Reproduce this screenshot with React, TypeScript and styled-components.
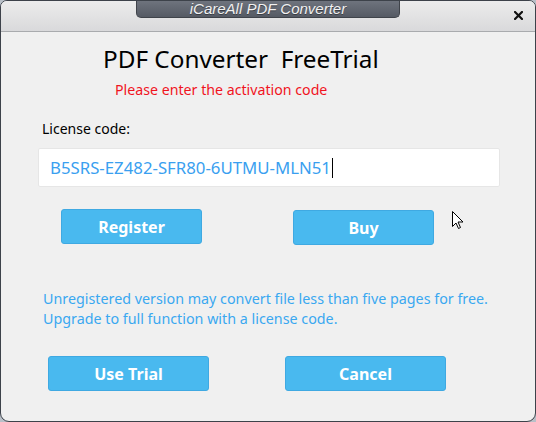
import React from "react";
import styled, { createGlobalStyle } from "styled-components";

const Global = createGlobalStyle`
  html, body { margin: 0; padding: 0; background: #b9c0c8; }
  body { width: 536px; height: 422px; overflow: hidden; }
`;

const Window = styled.div`
  position: relative;
  box-sizing: border-box;
  width: 536px;
  height: 422px;
  border: 1px solid #3d424a;
  border-radius: 7px 7px 9px 9px;
  background: #f0f0f0;
  overflow: hidden;
  display: flex;
  flex-direction: column;
  font-family: "Noto Sans", "Open Sans", sans-serif;
`;

const TitleBar = styled.div`
  height: 30px;
  flex: none;
  border-bottom: 1px solid #a9abae;
  background: linear-gradient(#ececec, #d9d9db);
  display: grid;
  grid-template-columns: 1fr 264px 1fr;
  align-items: start;
`;

const TitleTab = styled.div`
  grid-column: 2;
  height: 18px;
  box-sizing: border-box;
  margin-top: -1px;
  border: 1px solid #3f434a;
  border-top: none;
  border-radius: 0 0 5px 5px;
  background: linear-gradient(#70757f, #555a64);
  color: #f2f2f2;
  font-family: "Liberation Sans", Arial, sans-serif;
  font-style: italic;
  font-size: 15px;
  line-height: 17px;
  text-align: center;
  text-shadow: 0 1px 0 #3a3d44;
`;

const CloseButton = styled.div`
  grid-column: 3;
  justify-self: end;
  margin: 10px 12px 0 0;
  width: 9px;
  height: 9px;
  display: flex;
`;

const Body = styled.div`
  flex: 1;
  display: flex;
  flex-direction: column;
  align-items: flex-start;
`;

const Heading = styled.h1`
  margin: 11px 0 0 102px;
  font-weight: 400;
  font-size: 24.3px;
  line-height: 32px;
  color: #000;
  white-space: pre;
`;

const Prompt = styled.div`
  margin: 6px 0 0 114px;
  font-size: 14.2px;
  line-height: 18px;
  color: #f0141e;
`;

const Label = styled.div`
  margin: 21px 0 0 41px;
  font-size: 14px;
  line-height: 18px;
  color: #000;
`;

const CodeField = styled.div`
  margin: 10px 0 0 37px;
  box-sizing: border-box;
  width: 462px;
  height: 39px;
  background: #fff;
  border: 1px solid #e6e6e6;
  border-radius: 2px;
  padding: 0 0 0 11px;
  display: flex;
  align-items: center;
  font-size: 16.8px;
  color: #3a9ff0;
`;

const Caret = styled.span`
  display: inline-block;
  width: 1px;
  height: 20px;
  background: #000;
  margin-left: 1px;
`;

const ButtonRow = styled.div<{ $top: number; $left: number; $gap: number }>`
  margin: ${(p) => p.$top}px 0 0 ${(p) => p.$left}px;
  display: flex;
  gap: ${(p) => p.$gap}px;
  align-items: flex-start;
`;

const Button = styled.div<{ $w: number; $dy?: number }>`
  box-sizing: border-box;
  width: ${(p) => p.$w}px;
  height: 35px;
  margin-top: ${(p) => p.$dy ?? 0}px;
  background: #49b9ef;
  border: 1px solid #3fa9e2;
  border-radius: 3px;
  color: #fff;
  font-weight: 700;
  font-size: 16px;
  display: flex;
  align-items: center;
  justify-content: center;
`;

const Notice = styled.div`
  margin: 44px 0 0 42px;
  font-size: 14.3px;
  line-height: 20px;
  color: #3aa8f0;
`;

const Cursor = styled.svg`
  position: absolute;
  left: 451px;
  top: 210px;
`;

export default function App() {
  return (
    <>
      <Global />
      <Window>
        <TitleBar>
          <TitleTab>iCareAll PDF Converter</TitleTab>
          <CloseButton>
            <svg width="9" height="9" viewBox="0 0 9 9">
              <path d="M1 1 L8 8 M8 1 L1 8" stroke="#111" strokeWidth="2.2" strokeLinecap="square" />
            </svg>
          </CloseButton>
        </TitleBar>
        <Body>
          <Heading>{"PDF Converter  FreeTrial"}</Heading>
          <Prompt>Please enter the activation code</Prompt>
          <Label>License code:</Label>
          <CodeField>
            B5SRS-EZ482-SFR80-6UTMU-MLN51
            <Caret />
          </CodeField>
          <ButtonRow $top={22} $left={60} $gap={91}>
            <Button $w={141}>Register</Button>
            <Button $w={141} $dy={1}>Buy</Button>
          </ButtonRow>
          <Notice>
            Unregistered version may convert file less than five pages for free.
            <br />
            Upgrade to full function with a license code.
          </Notice>
          <ButtonRow $top={27} $left={47} $gap={76}>
            <Button $w={161}>Use Trial</Button>
            <Button $w={161}>Cancel</Button>
          </ButtonRow>
        </Body>
        <Cursor width="12" height="19" viewBox="0 0 12 19">
          <path d="M0.5 0.5 L0.5 15.5 L4 12 L6.5 17.5 L8.5 16.5 L6 11 L11 11 Z" fill="#fff" stroke="#000" strokeWidth="1" strokeLinejoin="miter" />
        </Cursor>
      </Window>
    </>
  );
}
